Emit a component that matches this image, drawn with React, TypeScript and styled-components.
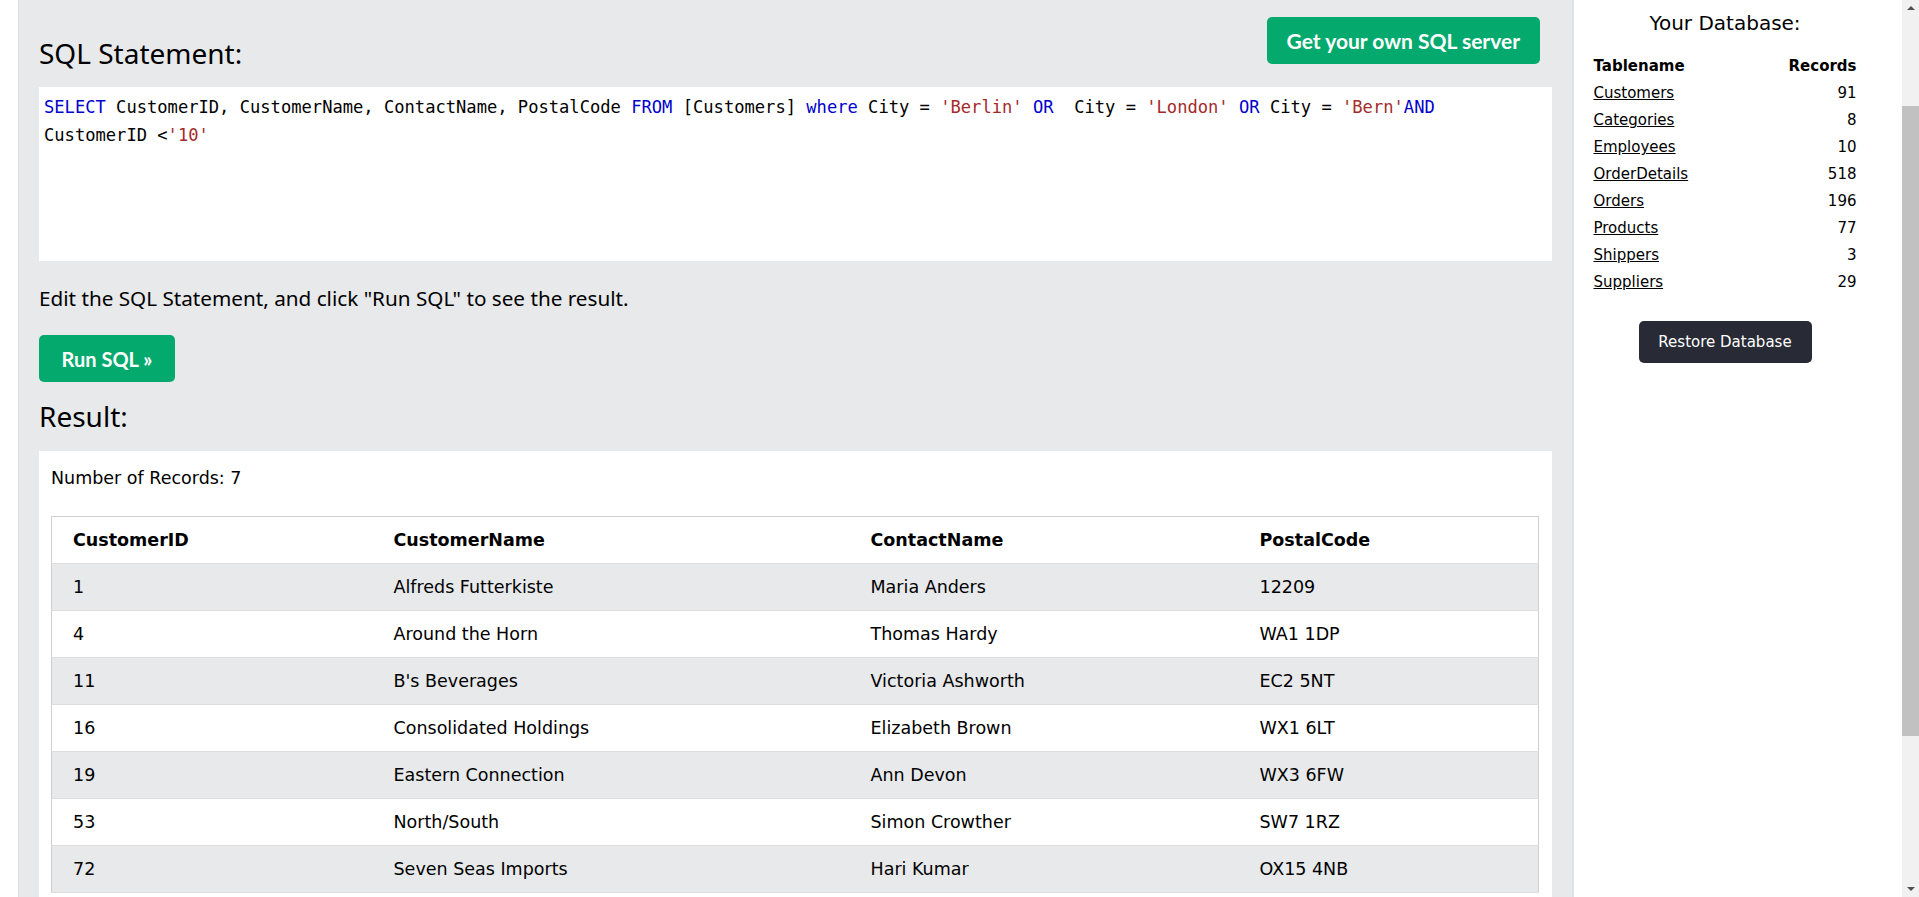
import styled, { createGlobalStyle } from "styled-components";

const GlobalStyle = createGlobalStyle`
  html, body {
    margin: 0;
    padding: 0;
    height: 100%;
    overflow: hidden;
    background: #fff;
  }
  #root {
    height: 100%;
  }
`;

const Page = styled.div`
  display: flex;
  height: 897px;
  overflow: hidden;
  font-family: "Noto Sans", "Open Sans", sans-serif;
  color: #000;
`;

const EditorEdge = styled.div`
  flex: none;
  width: 18px;
  background: #fff;
  border-right: 1px solid #dcdee0;
`;

const Main = styled.main`
  flex: 1;
  min-width: 0;
  display: flex;
  flex-direction: column;
  background: #e7e9eb;
  padding: 16px 20px 0 20px;
  overflow: hidden;

  & > * {
    flex-shrink: 0;
  }
`;

const TopRow = styled.div`
  display: flex;
  justify-content: space-between;
  align-items: flex-end;
  height: 48px;
`;

const Heading = styled.h2<{ $gap?: number }>`
  margin: ${(p) => p.$gap ?? 0}px 0 -3px 0;
  font-size: 28px;
  font-weight: 400;
  line-height: 1;
`;

const GreenButton = styled.button<{ $right?: number }>`
  height: 47px;
  padding: 0 20px;
  margin-right: ${(p) => p.$right ?? 0}px;
  border: none;
  border-radius: 5px;
  background: #04aa6d;
  color: #fff;
  font-family: Lato, "Open Sans", sans-serif;
  font-weight: 700;
  font-size: 21px;
  cursor: pointer;
`;

const CodeBox = styled.div`
  margin-top: 23px;
  height: 174px;
  box-sizing: border-box;
  padding: 6px 5px 0 5px;
  background: #fff;
  font-family: "DejaVu Sans Mono", "Liberation Mono", monospace;
  font-size: 17.13px;
  line-height: 28.3px;
  white-space: pre;
`;

const Kw = styled.span`
  color: #0000cd;
`;

const Str = styled.span`
  color: #a52a2a;
`;

const Hint = styled.p`
  margin: 23.5px 0 0 0;
  font-size: 20.7px;
  line-height: 26px;
`;

const RunButton = styled(GreenButton)`
  align-self: flex-start;
  margin-top: 24.5px;
  width: 136px;
  padding: 0;
  font-size: 20px;
`;

const ResultBox = styled.div`
  margin-top: 24px;
  background: #fff;
  padding: 17px 12px 12px 12px;
  font-family: "DejaVu Sans", Verdana, sans-serif;
  font-size: 17.5px;
`;

const RecordCount = styled.div`
  line-height: 20px;
`;

const ResultTable = styled.table`
  margin-top: 28px;
  width: 1487px;
  border-collapse: collapse;
  table-layout: fixed;
  border: 1px solid #cfcfcf;
`;

const Row = styled.tr<{ $shaded: boolean }>`
  background: ${(p) => (p.$shaded ? "#e7e9eb" : "#fff")};
  border-bottom: 1px solid #dddddd;
`;

const Th = styled.th`
  height: 46px;
  padding: 0 21px;
  text-align: left;
  font-weight: 700;
  line-height: 20px;
`;

const Td = styled.td`
  height: 46px;
  padding: 0 21px;
  line-height: 20px;
`;

const Sidebar = styled.aside`
  flex: none;
  width: 330px;
  display: flex;
  flex-direction: column;
  align-items: center;
  padding: 11px 26px 0 0;
  box-sizing: border-box;
  background: #fff;
  border-left: 2px solid #dfe1e3;
  font-family: "DejaVu Sans", Verdana, sans-serif;
`;

const SideTitle = styled.div`
  font-size: 20px;
  line-height: 24px;
`;

const DbTable = styled.table`
  margin-top: 18px;
  width: 263px;
  border-collapse: collapse;
  font-size: 15px;
`;

const DbCell = styled.td<{ $num?: boolean; $head?: boolean }>`
  height: 27px;
  padding: 0;
  line-height: 27px;
  text-align: ${(p) => (p.$num ? "right" : "left")};
  font-weight: ${(p) => (p.$head ? 700 : 400)};
`;

const DbLink = styled.a`
  color: #000;
  text-decoration: underline;
`;

const RestoreButton = styled.button`
  margin-top: 25px;
  width: 173px;
  height: 42px;
  border: none;
  border-radius: 5px;
  background: #282a35;
  color: #fff;
  font-family: "DejaVu Sans", Verdana, sans-serif;
  font-size: 15px;
  cursor: pointer;
`;

const ScrollTrack = styled.div`
  flex: none;
  width: 17px;
  display: flex;
  flex-direction: column;
  align-items: center;
  background: #f1f1f1;
`;

const ScrollArrow = styled.div<{ $down?: boolean }>`
  width: 0;
  height: 0;
  margin: ${(p) => (p.$down ? "auto 0 6px 0" : "6px 0 0 0")};
  border-left: 4px solid transparent;
  border-right: 4px solid transparent;
  ${(p) =>
    p.$down ? "border-top: 4px solid #505050;" : "border-bottom: 4px solid #505050;"}
`;

const ScrollThumb = styled.div`
  margin-top: 96px;
  width: 17px;
  height: 630px;
  background: #c1c1c1;
`;

const RESULTS = [
  ["1", "Alfreds Futterkiste", "Maria Anders", "12209"],
  ["4", "Around the Horn", "Thomas Hardy", "WA1 1DP"],
  ["11", "B's Beverages", "Victoria Ashworth", "EC2 5NT"],
  ["16", "Consolidated Holdings", "Elizabeth Brown", "WX1 6LT"],
  ["19", "Eastern Connection", "Ann Devon", "WX3 6FW"],
  ["53", "North/South", "Simon Crowther", "SW7 1RZ"],
  ["72", "Seven Seas Imports", "Hari Kumar", "OX15 4NB"],
];

const TABLES = [
  ["Customers", "91"],
  ["Categories", "8"],
  ["Employees", "10"],
  ["OrderDetails", "518"],
  ["Orders", "196"],
  ["Products", "77"],
  ["Shippers", "3"],
  ["Suppliers", "29"],
];

const COLUMN_WIDTHS = [321, 477, 389, 300];

export default function App() {
  return (
    <Page>
      <GlobalStyle />
      <EditorEdge />
      <Main>
        <TopRow>
          <Heading>SQL Statement:</Heading>
          <GreenButton $right={12}>Get your own SQL server</GreenButton>
        </TopRow>
        <CodeBox>
          <div>
            <Kw>SELECT</Kw> CustomerID, CustomerName, ContactName, PostalCode{" "}
            <Kw>FROM</Kw> [Customers] <Kw>where</Kw> City = <Str>'Berlin'</Str>{" "}
            <Kw>OR</Kw>{"  "}City = <Str>'London'</Str> <Kw>OR</Kw> City ={" "}
            <Str>'Bern'</Str>
            <Kw>AND</Kw>
          </div>
          <div>
            CustomerID &lt;<Str>'10'</Str>
          </div>
        </CodeBox>
        <Hint>Edit the SQL Statement, and click "Run SQL" to see the result.</Hint>
        <RunButton>Run SQL »</RunButton>
        <Heading $gap={20}>Result:</Heading>
        <ResultBox>
          <RecordCount>Number of Records: 7</RecordCount>
          <ResultTable>
            <colgroup>
              {COLUMN_WIDTHS.map((w, i) => (
                <col key={i} style={{ width: w }} />
              ))}
            </colgroup>
            <thead>
              <Row $shaded={false}>
                <Th>CustomerID</Th>
                <Th>CustomerName</Th>
                <Th>ContactName</Th>
                <Th>PostalCode</Th>
              </Row>
            </thead>
            <tbody>
              {RESULTS.map((r, i) => (
                <Row key={r[0]} $shaded={i % 2 === 0}>
                  {r.map((c, j) => (
                    <Td key={j}>{c}</Td>
                  ))}
                </Row>
              ))}
            </tbody>
          </ResultTable>
        </ResultBox>
      </Main>
      <Sidebar>
        <SideTitle>Your Database:</SideTitle>
        <DbTable>
          <tbody>
            <tr>
              <DbCell $head>Tablename</DbCell>
              <DbCell $head $num>
                Records
              </DbCell>
            </tr>
            {TABLES.map(([name, count]) => (
              <tr key={name}>
                <DbCell>
                  <DbLink href="#">{name}</DbLink>
                </DbCell>
                <DbCell $num>{count}</DbCell>
              </tr>
            ))}
          </tbody>
        </DbTable>
        <RestoreButton>Restore Database</RestoreButton>
      </Sidebar>
      <ScrollTrack>
        <ScrollArrow />
        <ScrollThumb />
        <ScrollArrow $down />
      </ScrollTrack>
    </Page>
  );
}
